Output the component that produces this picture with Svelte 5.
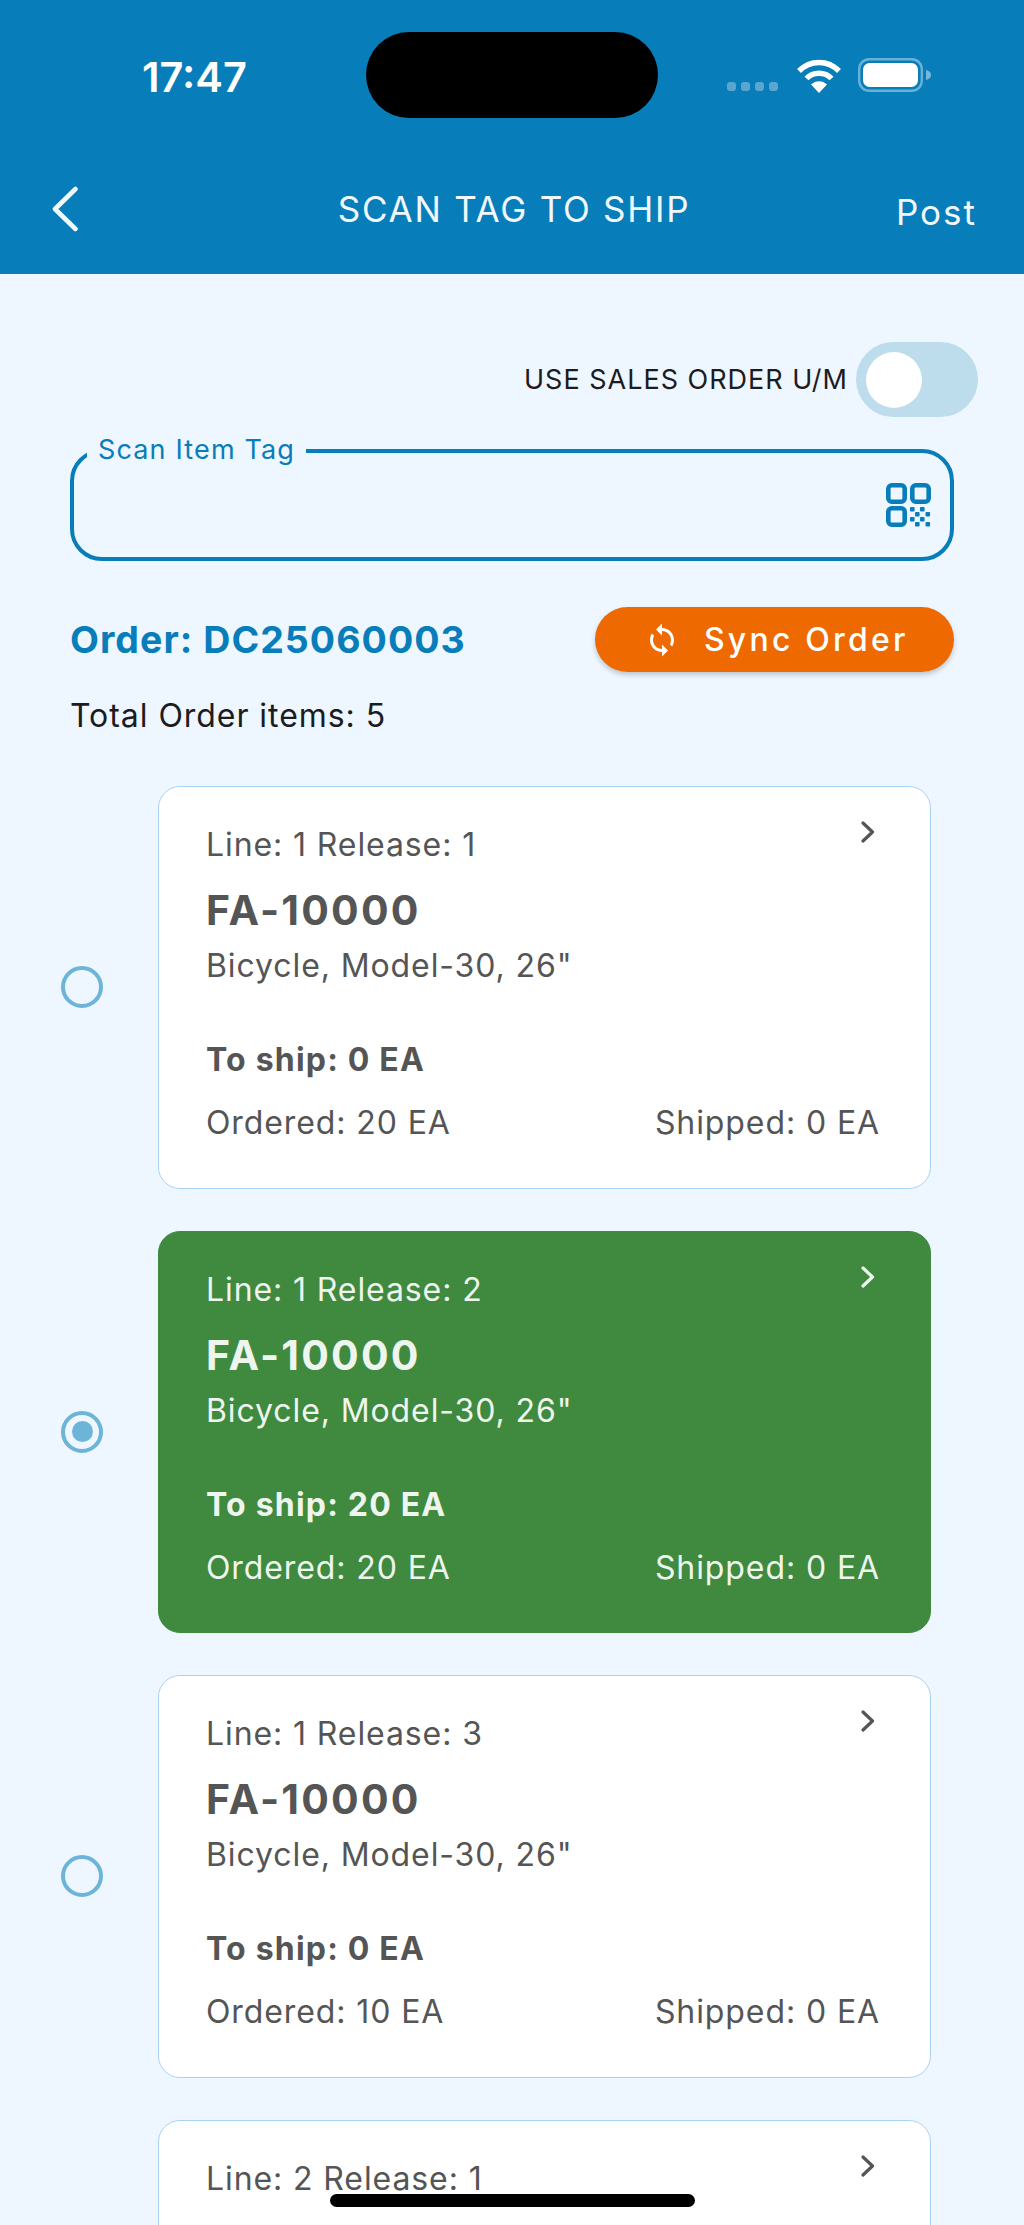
<script>
  const cards = [
    { line: 1, rel: 1, ship: 0, ordered: 20 },
    { line: 1, rel: 2, ship: 20, ordered: 20, active: true },
    { line: 1, rel: 3, ship: 0, ordered: 10 },
    { line: 2, rel: 1, ship: 0, ordered: 10 }
  ];
</script>

<div class="page">
  <header class="head">
    <div class="status">
      <span class="time">17:47</span>
      <span class="island"></span>
      <div class="sys">
        <span class="dots"><i></i><i></i><i></i><i></i></span>
        <svg class="wifi" viewBox="0 0 46 35" width="46" height="35">
          <path d="M3 13 C14 1.5 32 1.5 43 13" fill="none" stroke="#fff" stroke-width="5.5"/>
          <path d="M10.5 20.5 C17 13.5 29 13.5 35.5 20.5" fill="none" stroke="#fff" stroke-width="5.5"/>
          <path d="M23 35 L15 26.5 C19.5 22 26.5 22 31 26.5 Z" fill="#fff"/>
        </svg>
        <svg class="batt" viewBox="0 0 74 34" width="74" height="34">
          <rect x="1.2" y="1.2" width="62.6" height="31.6" rx="10" fill="none" stroke="#fff" stroke-opacity=".4" stroke-width="2.4"/>
          <rect x="5" y="5" width="55" height="24" rx="6.5" fill="#fff"/>
          <path d="M68 12 C72 13 73 15 73 17 C73 19 72 21 68 22 Z" fill="#fff" fill-opacity=".45"/>
        </svg>
      </div>
    </div>
    <div class="nav">
      <svg class="back" viewBox="0 0 28 46" width="28" height="46">
        <path d="M24.5 3 L4 23 L24.5 43" fill="none" stroke="#f1f8fc" stroke-width="4.6" stroke-linecap="round" stroke-linejoin="round"/>
      </svg>
      <span class="title">SCAN TAG TO SHIP</span>
      <span class="post">Post</span>
    </div>
  </header>

  <main class="body">
    <div class="toggle-row">
      <span class="toggle-label">USE SALES ORDER U/M</span>
      <span class="switch"><span class="knob"></span></span>
    </div>

    <div class="field">
      <span class="field-label">Scan Item Tag</span>
      <svg class="qr" viewBox="0 0 45 44" width="45" height="44">
        <g fill="none" stroke="#077dba" stroke-width="4.6">
          <rect x="2.3" y="2.3" width="16.4" height="16.4" rx="3.5"/>
          <rect x="26.3" y="2.3" width="16.4" height="16.4" rx="3.5"/>
          <rect x="2.3" y="25.3" width="16.4" height="16.4" rx="3.5"/>
        </g>
        <g fill="#077dba">
          <rect x="24" y="24" width="4.6" height="4.6" rx="1"/><rect x="34" y="24" width="4.6" height="4.6" rx="1"/>
          <rect x="29" y="29" width="4.6" height="4.6" rx="1"/><rect x="39.5" y="29" width="4.6" height="4.6" rx="1"/>
          <rect x="24" y="34" width="4.6" height="4.6" rx="1"/><rect x="34" y="34" width="4.6" height="4.6" rx="1"/>
          <rect x="29" y="39" width="4.6" height="4.6" rx="1"/><rect x="39.5" y="39" width="4.6" height="4.6" rx="1"/>
        </g>
      </svg>
    </div>

    <div class="order-row">
      <span class="order">Order: DC25060003</span>
      <button class="sync">
        <svg viewBox="0 0 24 24" width="36" height="36"><path fill="#fff" d="M12 4V1L8 5l4 4V6c3.31 0 6 2.69 6 6 0 1.01-.25 1.97-.7 2.8l1.46 1.46C19.54 15.03 20 13.57 20 12c0-4.42-3.58-8-8-8zm0 14c-3.31 0-6-2.69-6-6 0-1.01.25-1.97.7-2.8L5.24 7.74C4.46 8.97 4 10.43 4 12c0 4.42 3.58 8 8 8v3l4-4-4-4v3z"/></svg>
        <span>Sync Order</span>
      </button>
    </div>

    <div class="total">Total Order items: 5</div>

    <div class="list">
      {#each cards as c}
        <div class="row">
          <span class="radio" class:on={c.active}></span>
          <article class="card" class:active={c.active}>
            <svg class="chev" viewBox="0 0 16 22" width="16" height="22">
              <path d="M3 2 L12.5 11 L3 20" fill="none" stroke="currentColor" stroke-width="3.2" stroke-linecap="round" stroke-linejoin="round"/>
            </svg>
            <div class="l1">Line: {c.line} Release: {c.rel}</div>
            <div class="code">FA-10000</div>
            <div class="l1 desc">Bicycle, Model-30, 26"</div>
            <div class="l1 ship">To ship: {c.ship} EA</div>
            <div class="l1 qty"><span>Ordered: {c.ordered} EA</span><span>Shipped: 0 EA</span></div>
          </article>
        </div>
      {/each}
    </div>
  </main>
  <div class="home"></div>
</div>

<style>
  :global(body) { margin: 0; background: #eef6ff; }
  .page {
    position: relative;
    width: 1024px;
    height: 2225px;
    overflow: hidden;
    background: #eef6ff;
    font-family: Inter, "Liberation Sans", sans-serif;
    color: #1c1c1e;
  }
  .head { height: 274px; background: #077dba; color: #fff; box-sizing: border-box; padding-top: 32px; }
  .status { height: 86px; display: flex; align-items: flex-start; }
  .time { margin: 22px 0 0 142px; width: 224px; font-size: 41.5px; font-weight: 600; line-height: 46px; }
  .island { width: 292px; height: 86px; border-radius: 43px; background: #000; flex: none; }
  .sys { margin: 26px 0 0 69px; display: flex; align-items: flex-start; }
  .dots { display: flex; gap: 5px; margin-top: 24px; }
  .dots i { width: 9px; height: 9px; border-radius: 3px; background: #5aa6d0; display: block; }
  .wifi { margin-left: 18px; }
  .batt { margin-left: 16px; }
  .nav { display: grid; grid-template-columns: 1fr auto 1fr; align-items: center; height: 60px; margin-top: 61px; padding: 0 47px 0 51px; }
  .title { font-size: 35px; letter-spacing: 1.75px; line-height: 40px; color: #f1f8fc; white-space: nowrap; }
  .post { justify-self: end; margin-top: 5px; font-size: 35px; letter-spacing: 2px; line-height: 40px; color: #f1f8fc; }

  .body { padding: 68px 70px 0 70px; }
  .toggle-row { display: flex; justify-content: flex-end; align-items: center; gap: 8px; margin-right: -24px; height: 75px; }
  .toggle-label { font-size: 27px; letter-spacing: 1px; color: #1c1c1e; white-space: nowrap; }
  .switch { width: 122px; height: 75px; border-radius: 38px; background: #bddcec; display: flex; align-items: center; padding-left: 10px; box-sizing: border-box; }
  .knob { width: 56px; height: 56px; border-radius: 50%; background: #fff; display: block; }

  .field {
    position: relative;
    margin-top: 32px;
    height: 112px;
    box-sizing: border-box;
    border: 4.5px solid #077dba;
    border-radius: 32px;
    display: flex;
    align-items: center;
    justify-content: flex-end;
    padding-right: 19px;
  }
  .field-label {
    position: absolute;
    left: 13px;
    top: -20px;
    padding: 0 11px;
    background: #eef6ff;
    font-size: 27px;
    letter-spacing: 1.15px;
    line-height: 34px;
    color: #077dba;
    white-space: nowrap;
  }
  .order-row { display: flex; justify-content: space-between; align-items: center; margin-top: 46px; height: 65px; }
  .order { font-size: 37.5px; font-weight: 700; letter-spacing: 1.05px; color: #077dba; white-space: nowrap; }
  .sync {
    width: 359px;
    height: 65px;
    border: 0;
    border-radius: 33px;
    background: #ee6a00;
    color: #fff;
    font: inherit;
    font-size: 32px;
    font-weight: 500;
    letter-spacing: 3.2px;
    display: flex;
    align-items: center;
    padding: 0 0 0 49px;
    gap: 24px;
    box-shadow: 0 3px 5px rgba(0, 0, 0, .2);
    white-space: nowrap;
  }
  .total { margin-top: 24px; font-size: 32px; line-height: 40px; letter-spacing: .95px; color: #1c1c1e; }

  .list { margin-top: 50px; display: flex; flex-direction: column; gap: 42px; }
  .row { display: flex; align-items: center; }
  .radio { width: 42px; height: 42px; box-sizing: border-box; border: 4.5px solid #6cb4d8; border-radius: 50%; margin-left: -9px; flex: none; position: relative; }
  .radio.on::after { content: ""; position: absolute; inset: 6.5px; border-radius: 50%; background: #6cb4d8; }
  .card {
    position: relative;
    margin-left: 55px;
    width: 773px;
    height: 402.5px;
    flex: none;
    box-sizing: border-box;
    background: #fff;
    border: 1.5px solid #a9d3f5;
    border-radius: 22px;
    padding: 38px 50px 0 47px;
    color: #555;
  }
  .card.active { background: #3f8a3f; border-color: #3f8a3f; color: #eef5ee; }
  .chev { position: absolute; right: 54px; top: 34px; }
  .l1 { font-size: 32px; line-height: 40px; letter-spacing: .9px; white-space: nowrap; }
  .code { font-size: 41px; font-weight: 700; line-height: 48px; margin-top: 21px; letter-spacing: 2.2px; }
  .desc { margin-top: 12px; }
  .l1.ship { font-weight: 700; margin-top: 54px; letter-spacing: 1.2px; }
  .qty { display: flex; justify-content: space-between; margin-top: 23px; }
  .home { position: absolute; left: 330px; top: 2194px; width: 365px; height: 13px; border-radius: 7px; background: #000; }
</style>
